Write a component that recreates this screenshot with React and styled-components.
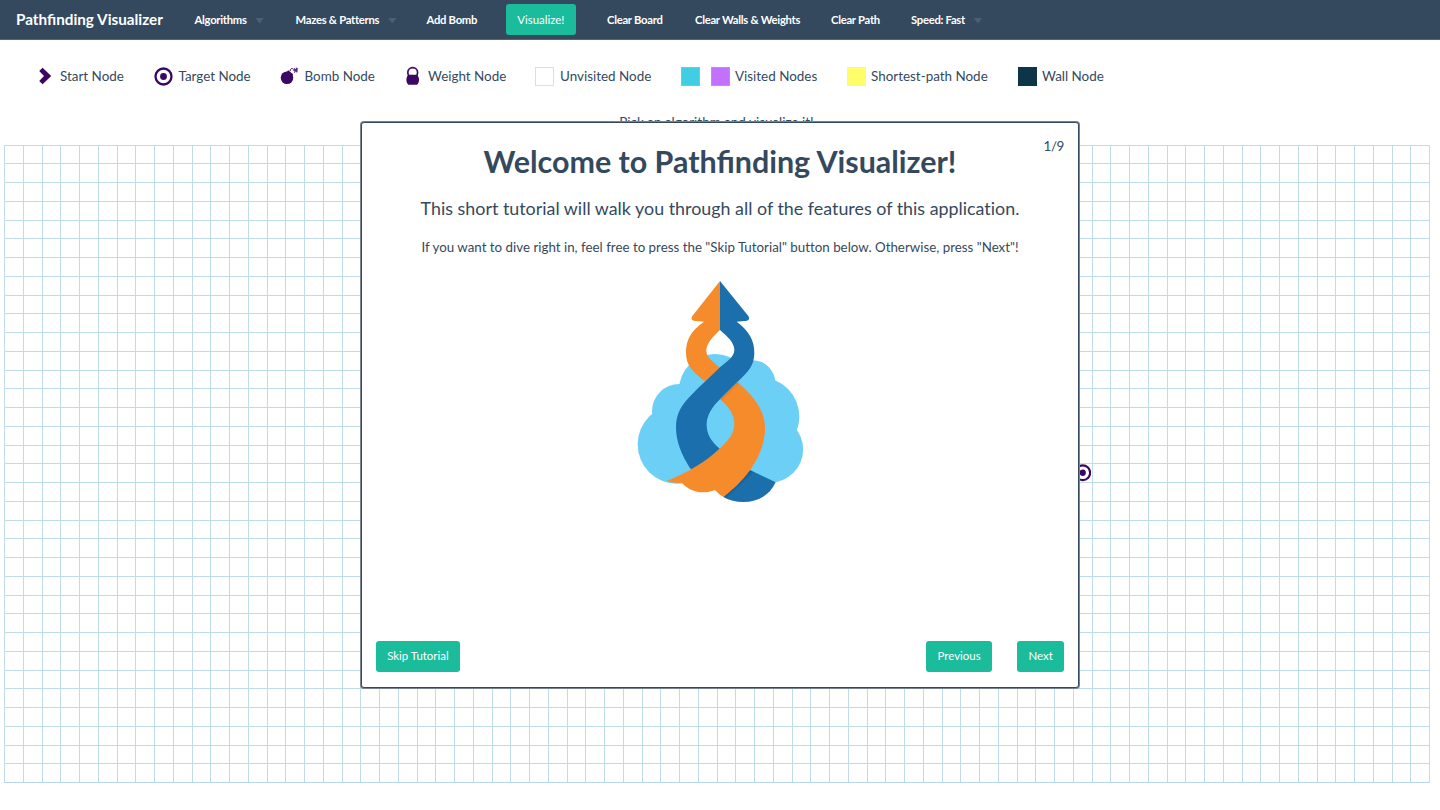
import React from 'react';
import styled, { createGlobalStyle } from 'styled-components';

const COLS = 76;
const ROWS = 34;
const CELL = 18.75;
const TARGET = { row: 17, col: 57 };

const GlobalStyle = createGlobalStyle`
  *, *::before, *::after { box-sizing: border-box; }
  body {
    margin: 0;
    background: #fff;
    color: #34495e;
    font-family: Lato, "Open Sans", sans-serif;
    overflow: hidden;
  }
`;

const Page = styled.div`
  position: relative;
  display: flex;
  flex-direction: column;
  height: 810px;
`;

const Navbar = styled.nav`
  display: flex;
  flex: none;
  align-items: center;
  height: 40px;
  padding-left: 16px;
  background: #34495e;
  border-bottom: 1px solid #52667a;
  color: #fff;
`;

const Brand = styled.a`
  width: 178.5px;
  padding-bottom: 2px;
  font-size: 15.25px;
  font-weight: 700;
  white-space: nowrap;
`;

const NavItem = styled.a`
  display: flex;
  align-items: center;
  gap: 8.5px;
  width: ${(p) => p.$width}px;
  font-size: 11.25px;
  font-weight: 700;
  letter-spacing: -0.27px;
  white-space: nowrap;
`;

const Caret = styled.span`
  width: 9px;
  height: 6px;
  margin-top: 2px;
  background: #4b6075;
  clip-path: polygon(0 0, 100% 0, 50% 100%);
`;

const Button = styled.button`
  height: 31px;
  padding: 0 11.2px 1px;
  border: 0;
  border-radius: 3px;
  background: #1abc9c;
  color: #fff;
  font-family: inherit;
  font-size: 11.45px;
  line-height: 15px;
  white-space: nowrap;
`;

const VisualizeSlot = styled.div`
  width: 101px;
`;

const Legend = styled.ul`
  display: flex;
  flex: none;
  align-items: center;
  height: 20px;
  margin: 26px 0 0;
  padding: 0 0 0 35px;
  list-style: none;
`;

const LegendItem = styled.li`
  display: flex;
  align-items: center;
  width: ${(p) => p.$width}px;
  font-size: 13.43px;
  line-height: 20px;
  white-space: nowrap;

  svg { display: block; flex: none; margin-right: 6px; }
`;

const Swatch = styled.span`
  flex: none;
  width: 19px;
  height: 19px;
  margin-right: ${(p) => p.$gap || 6}px;
  border: 1px solid ${(p) => p.$border || p.$fill};
  background: ${(p) => p.$fill};
`;

const Status = styled.p`
  flex: none;
  height: 20px;
  margin: 26px 0 12.6px;
  padding-right: 7px;
  font-size: 13.45px;
  line-height: 20px;
  text-align: center;
`;

const Board = styled.div`
  display: grid;
  flex: none;
  grid-template-columns: repeat(${COLS}, ${CELL}px);
  grid-template-rows: repeat(${ROWS}, ${CELL}px);
  width: 1426px;
  margin-left: 4px;
  border-right: 1px solid #c3ddf0;
  border-bottom: 1px solid #b6d5ec;
`;

const Cell = styled.div`
  display: flex;
  align-items: center;
  justify-content: center;
  border-top: 1px solid #c0daee;
  border-left: 1px solid #c0daee;

  svg { flex: none; margin-right: 0.5px; }
`;

const Tutorial = styled.section`
  position: absolute;
  top: 122px;
  left: 361px;
  display: flex;
  flex-direction: column;
  width: 718px;
  height: 566px;
  border: 1px solid #34495e;
  border-radius: 3px;
  box-shadow: 0 0 0 1px #77838f;
  background: #fff;
  text-align: center;
`;

const Counter = styled.span`
  position: absolute;
  top: 14px;
  right: 14px;
  font-size: 13.43px;
  line-height: 18px;
  letter-spacing: -0.4px;
`;

const Title = styled.h3`
  margin: 18px 0 0;
  font-size: 30.45px;
  font-weight: 700;
  line-height: 40px;
  white-space: nowrap;
`;

const Lead = styled.h6`
  margin: 15px 0 0;
  font-size: 17.85px;
  font-weight: 400;
  line-height: 24px;
  letter-spacing: 0.01px;
  white-space: nowrap;
`;

const Note = styled.p`
  margin: 17px 0 0;
  font-size: 13.32px;
  line-height: 20px;
  letter-spacing: 0.01px;
  white-space: nowrap;
`;

const Figure = styled.div`
  display: flex;
  justify-content: center;
  margin-top: 13px;
`;

const Footer = styled.footer`
  display: flex;
  gap: 25.5px;
  margin-top: auto;
  padding: 0 14px 15.5px;
`;

const Spacer = styled.span`
  flex: 1;
`;

const purple = '#3c0663';

const StartIcon = () => (
  <svg width="19" height="20" viewBox="0 0 19 20">
    <path d="M4.2 5 7.6 1.7 16.2 10l-8.6 8.3L4.2 15 9 10Z" fill={purple} />
  </svg>
);

const TargetIcon = ({ size = 19 }) => (
  <svg width={size} height={size} viewBox="0 0 19 19">
    <circle cx="9.5" cy="9.5" r="8" fill="none" stroke={purple} strokeWidth="2.3" />
    <circle cx="9.5" cy="9.5" r="3.4" fill={purple} />
  </svg>
);

const BombIcon = () => (
  <svg width="19" height="20" viewBox="0 0 19 20">
    <circle cx="7" cy="11.8" r="6.3" fill={purple} />
    <path d="m8.2 4.3 5 4.2-2 2.3-5-4.2Z" fill={purple} />
    <path d="M10 5.2C10.5 1.8 12.6 2 13.5 3.7" fill="none" stroke={purple} strokeWidth="1" />
    <g stroke={purple} strokeWidth="1.1" opacity=".85">
      <path d="m13.2 4.2 4.6.5M14 2.3l3.2 4M16.8 1.8l-2.5 5M15.7 4.2l2.3-1.6" />
    </g>
  </svg>
);

const WeightIcon = () => (
  <svg width="19" height="20" viewBox="0 0 19 20">
    <circle cx="9.7" cy="6.6" r="4.9" fill="none" stroke={purple} strokeWidth="1.7" />
    <path d="M5.4 8.8H14C15.3 10.2 16 11.8 16 13.8C16 15.6 15.6 17.1 14.5 18.3C14.2 18.7 13.8 18.8 13.3 18.8H6.1C5.6 18.8 5.2 18.7 4.9 18.3C3.8 17.1 3.4 15.6 3.4 13.8C3.4 11.8 4.1 10.2 5.4 8.8Z" fill={purple} />
  </svg>
);

const CloudArrows = () => (
  <svg width="200" height="250" viewBox="0 0 600 750">
    <defs>
      <linearGradient id="fold" gradientUnits="userSpaceOnUse" x1="345" y1="636" x2="360" y2="651">
        <stop offset="0" stopColor="#154f80" />
        <stop offset="1" stopColor="#1b6fac" />
      </linearGradient>
      <linearGradient id="tuck" gradientUnits="userSpaceOnUse" x1="324" y1="362" x2="332" y2="370">
        <stop offset="0" stopColor="#e07a28" />
        <stop offset="1" stopColor="#f68b2c" />
      </linearGradient>
    </defs>
    <g fill="#6bcff6">
      <circle cx="171" cy="523" r="118" />
      <circle cx="178" cy="424" r="82" />
      <circle cx="285" cy="360" r="108" />
      <circle cx="398" cy="339" r="68" />
      <circle cx="420" cy="440" r="118" />
      <circle cx="450" cy="538" r="99.5" />
      <path d="M160 420H460V600L390 620H170Z" />
    </g>
    <path d="M300 33 217 138C211 149 218 153 230 153L252 155C212 184 198 208 198 248C198 286 218 306 255 334L304 296C278 275 259 262 259 243C259 222 276 202 300 180Z" fill="#f68b2c" />
    <path d="M300 33 385 138C391 149 384 153 373 153L350 155C389 184 403 212 403 248C403 286 386 304 352 336L300 388C275 412 260 437 260 464C260 493 274 514 299 536L302 560L240 600L211 596C184 554 168 514 168 472C168 432 184 404 215 374C243 345 271 321 300 292C323 272 343 260 343 240C343 218 322 199 300 180Z" fill="#1b6fac" />
    <path d="M390 600 467 637C449 676 414 696 370 696C348 696 328 691 310 681Z" fill="url(#fold)" />
    <path d="M352 336C397 374 435 419 435 474C435 556 376 632 310 681Q297 674 285 660C250 674 211 667 186 639Q161 640 140 633C206 605 258 575 298 536C324 513 343 491 343 461C343 434 325 408 300 388Z" fill="url(#tuck)" />
  </svg>
);

const navBefore = [
  { label: 'Algorithms', width: 101, caret: true },
  { label: 'Mazes & Patterns', width: 131, caret: true },
  { label: 'Add Bomb', width: 79.5 },
];

const navAfter = [
  { label: 'Clear Board', width: 88 },
  { label: 'Clear Walls & Weights', width: 136 },
  { label: 'Clear Path', width: 80 },
  { label: 'Speed: Fast', width: 90, caret: true },
];

const NavLink = ({ label, width, caret }) => (
  <NavItem $width={width}>
    {label}
    {caret && <Caret />}
  </NavItem>
);

const cells = Array.from({ length: ROWS * COLS }, (_, i) => i);
const targetIndex = TARGET.row * COLS + TARGET.col;

export default function App() {
  return (
    <Page>
      <GlobalStyle />
      <Navbar>
        <Brand>Pathfinding Visualizer</Brand>
        {navBefore.map((item) => <NavLink key={item.label} {...item} />)}
        <VisualizeSlot><Button>Visualize!</Button></VisualizeSlot>
        {navAfter.map((item) => <NavLink key={item.label} {...item} />)}
      </Navbar>

      <Legend>
        <LegendItem $width={118.5}><StartIcon />Start Node</LegendItem>
        <LegendItem $width={126}><TargetIcon />Target Node</LegendItem>
        <LegendItem $width={123.5}><BombIcon />Bomb Node</LegendItem>
        <LegendItem $width={132}><WeightIcon />Weight Node</LegendItem>
        <LegendItem $width={146}><Swatch $fill="#fff" $border="#cbe3f4" />Unvisited Node</LegendItem>
        <LegendItem $width={166}>
          <Swatch $fill="#40cee3" $border="#68cbe7" $gap={11} />
          <Swatch $fill="#c170ff" $border="#bc8bf5" $gap={5} />
          Visited Nodes
        </LegendItem>
        <LegendItem $width={170.5}><Swatch $fill="#fffe6a" $border="#f8fa87" $gap={5} />Shortest-path Node</LegendItem>
        <LegendItem $width={100}><Swatch $fill="#0c3547" $gap={5.5} />Wall Node</LegendItem>
      </Legend>

      <Status>Pick an algorithm and visualize it!</Status>

      <Board>
        {cells.map((i) => (
          <Cell key={i}>{i === targetIndex && <TargetIcon size={17.5} />}</Cell>
        ))}
      </Board>

      <Tutorial>
        <Counter>1/9</Counter>
        <Title>Welcome to Pathfinding Visualizer!</Title>
        <Lead>This short tutorial will walk you through all of the features of this application.</Lead>
        <Note>If you want to dive right in, feel free to press the "Skip Tutorial" button below. Otherwise, press "Next"!</Note>
        <Figure><CloudArrows /></Figure>
        <Footer>
          <Button>Skip Tutorial</Button>
          <Spacer />
          <Button>Previous</Button>
          <Button>Next</Button>
        </Footer>
      </Tutorial>
    </Page>
  );
}
